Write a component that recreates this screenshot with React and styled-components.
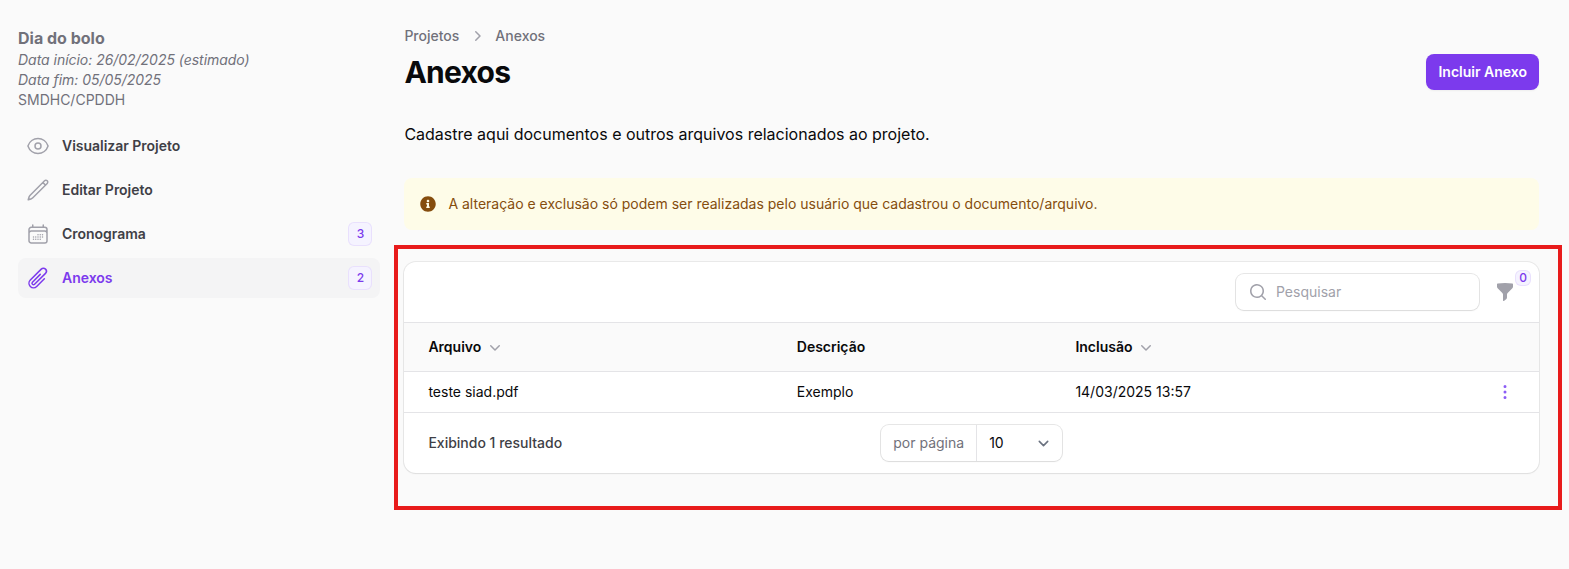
import React from "react";
import styled, { createGlobalStyle } from "styled-components";
import {
  HiOutlineEye,
  HiOutlinePencil,
  HiOutlineCalendarDays,
  HiOutlinePaperClip,
  HiMiniChevronRight,
  HiMiniChevronDown,
  HiMiniMagnifyingGlass,
  HiMiniFunnel,
  HiMiniEllipsisVertical,
} from "react-icons/hi2";
import { FaInfoCircle } from "react-icons/fa";

const GlobalStyle = createGlobalStyle`
  *, *::before, *::after { box-sizing: border-box; }
  body {
    margin: 0;
    background: #fafafa;
    color: #09090b;
    font-family: Inter, "Liberation Sans", sans-serif;
    font-size: 14px;
    line-height: 20px;
  }
  svg { display: block; flex-shrink: 0; }
  h1, p { margin: 0; }
  button, input { font: inherit; }
`;

const Page = styled.div`
  position: relative;
  display: flex;
  gap: 24px;
  height: 569px;
  padding: 26px 30px 0 18px;
  overflow: hidden;
`;

const Sidebar = styled.aside`
  width: 362.4px;
  flex-shrink: 0;
  color: #71717a;
`;

const ProjectName = styled.div`
  font-size: 16px;
  line-height: 24px;
  font-weight: 700;
`;

const ProjectInfo = styled.div`
  font-style: ${(p) => (p.$italic ? "italic" : "normal")};
  letter-spacing: ${(p) => (p.$italic ? "-0.03px" : "normal")};
`;

const Nav = styled.nav`
  display: flex;
  flex-direction: column;
  gap: 4px;
  margin-top: 16px;
`;

const NavItem = styled.a`
  display: flex;
  align-items: center;
  gap: 12px;
  height: 40px;
  padding: 8px;
  border-radius: 8px;
  font-weight: 600;
  letter-spacing: -0.02px;
  color: ${(p) => (p.$active ? "#7c3aed" : "#3f3f46")};
  background: ${(p) => (p.$active ? "#f4f4f5" : "transparent")};

  svg {
    color: ${(p) => (p.$active ? "#7c3aed" : "#a1a1aa")};
  }
`;

const NavLabel = styled.span`
  flex: 1;
`;

const Badge = styled.span`
  display: flex;
  align-items: center;
  justify-content: center;
  min-width: ${(p) => (p.$small ? 16 : 24)}px;
  height: ${(p) => (p.$small ? 16 : 24)}px;
  border-radius: 6px;
  background: #f5f3ff;
  box-shadow: inset 0 0 0 1px rgba(124, 58, 237, 0.1);
  color: #7c3aed;
  font-size: 12px;
  line-height: 16px;
  font-weight: 450;
`;

const Main = styled.main`
  flex: 1;
  min-width: 0;
`;

const Breadcrumbs = styled.div`
  display: flex;
  align-items: center;
  gap: 8px;
  margin-bottom: 8px;
  font-weight: 500;
  color: #71717a;

  svg {
    color: #a1a1aa;
  }
`;

const Header = styled.header`
  display: flex;
  align-items: center;
  justify-content: space-between;
`;

const Title = styled.h1`
  font-size: 30px;
  line-height: 36px;
  font-weight: 700;
  letter-spacing: -0.025em;
`;

const PrimaryButton = styled.button`
  height: 36px;
  padding: 8px 12px;
  border: 0;
  border-radius: 8px;
  background: #7c3aed;
  box-shadow: 0 1px 2px rgba(0, 0, 0, 0.05);
  color: #fff;
  font-weight: 600;
`;

const Description = styled.p`
  margin-top: 32px;
  font-size: 16px;
  line-height: 24px;
`;

const Notice = styled.div`
  display: flex;
  align-items: center;
  gap: 12px;
  height: 52px;
  margin-top: 32px;
  padding: 16px;
  border-radius: 8px;
  background: #fefce8;
  color: #854d0e;
`;

const Card = styled.section`
  margin-top: 32px;
  border-radius: 12px;
  background: #fff;
  box-shadow: 0 0 0 1px rgba(9, 9, 11, 0.07), 0 1px 2px rgba(0, 0, 0, 0.05);
`;

const Toolbar = styled.div`
  display: flex;
  align-items: center;
  justify-content: flex-end;
  gap: 16px;
  height: 60px;
  padding: 12px 24px;
`;

const SearchBox = styled.label`
  display: flex;
  align-items: center;
  gap: 8px;
  width: 243px;
  height: 36px;
  padding: 0 12px;
  border-radius: 8px;
  box-shadow: 0 0 0 1px rgba(9, 9, 11, 0.1), 0 1px 2px rgba(0, 0, 0, 0.05);
  color: #a1a1aa;
`;

const SearchInput = styled.input`
  flex: 1;
  min-width: 0;
  padding: 0;
  border: 0;
  outline: 0;
  background: transparent;
  color: #09090b;

  &::placeholder {
    color: #a1a1aa;
    opacity: 1;
  }
`;

const FilterButton = styled.div`
  position: relative;
  color: #a1a1aa;

  ${Badge} {
    position: absolute;
    top: -12px;
    left: 20px;
  }
`;

const TableRow = styled.div`
  display: grid;
  grid-template-columns: 368.4px 278.6px 1fr 20px;
  align-items: center;
  height: ${(p) => (p.$head ? 49 : 41)}px;
  padding: 0 24px;
  border-top: 1px solid #e4e4e7;
  background: ${(p) => (p.$head ? "#fafafa" : "transparent")};
  font-weight: ${(p) => (p.$head ? 600 : 400)};
`;

const HeadCell = styled.div`
  display: flex;
  align-items: center;
  gap: 4px;

  svg {
    color: #a1a1aa;
  }
`;

const RowMenu = styled.div`
  color: #8b5cf6;
`;

const CardFooter = styled.footer`
  display: grid;
  grid-template-columns: 1fr auto 1fr;
  align-items: center;
  height: 61px;
  padding: 0 24px;
  border-top: 1px solid #e4e4e7;
`;

const ResultCount = styled.span`
  font-weight: 500;
  color: #3f3f46;
`;

const PageSize = styled.div`
  display: flex;
  height: 36px;
  border-radius: 8px;
  box-shadow: 0 0 0 1px rgba(9, 9, 11, 0.1), 0 1px 2px rgba(0, 0, 0, 0.05);
`;

const PageSizeLabel = styled.span`
  padding: 8px 12px;
  border-right: 1px solid #e4e4e7;
  color: #71717a;
`;

const PageSizeValue = styled.span`
  display: flex;
  align-items: center;
  justify-content: space-between;
  width: 85px;
  padding: 0 8px 0 12px;
`;

const Highlight = styled.div`
  position: absolute;
  left: 394px;
  top: 245px;
  width: 1168px;
  height: 265px;
  border: 4px solid #e81b1b;
  pointer-events: none;
`;

const navItems = [
  { label: "Visualizar Projeto", Icon: HiOutlineEye },
  { label: "Editar Projeto", Icon: HiOutlinePencil },
  { label: "Cronograma", Icon: HiOutlineCalendarDays, count: 3 },
  { label: "Anexos", Icon: HiOutlinePaperClip, count: 2, active: true },
];

export default function App() {
  return (
    <>
      <GlobalStyle />
      <Page>
        <Sidebar>
          <ProjectName>Dia do bolo</ProjectName>
          <ProjectInfo $italic>Data início: 26/02/2025 (estimado)</ProjectInfo>
          <ProjectInfo $italic>Data fim: 05/05/2025</ProjectInfo>
          <ProjectInfo>SMDHC/CPDDH</ProjectInfo>
          <Nav>
            {navItems.map(({ label, Icon, count, active }) => (
              <NavItem key={label} $active={active}>
                <Icon size={24} />
                <NavLabel>{label}</NavLabel>
                {count && <Badge>{count}</Badge>}
              </NavItem>
            ))}
          </Nav>
        </Sidebar>
        <Main>
          <Breadcrumbs>
            <span>Projetos</span>
            <HiMiniChevronRight size={20} />
            <span>Anexos</span>
          </Breadcrumbs>
          <Header>
            <Title>Anexos</Title>
            <PrimaryButton>Incluir Anexo</PrimaryButton>
          </Header>
          <Description>Cadastre aqui documentos e outros arquivos relacionados ao projeto.</Description>
          <Notice>
            <FaInfoCircle size={16} />
            <span>A alteração e exclusão só podem ser realizadas pelo usuário que cadastrou o documento/arquivo.</span>
          </Notice>
          <Card>
            <Toolbar>
              <SearchBox>
                <HiMiniMagnifyingGlass size={20} />
                <SearchInput placeholder="Pesquisar" />
              </SearchBox>
              <FilterButton>
                <HiMiniFunnel size={20} />
                <Badge $small>0</Badge>
              </FilterButton>
            </Toolbar>
            <TableRow $head>
              <HeadCell>
                Arquivo <HiMiniChevronDown size={20} />
              </HeadCell>
              <HeadCell>Descrição</HeadCell>
              <HeadCell>
                Inclusão <HiMiniChevronDown size={20} />
              </HeadCell>
            </TableRow>
            <TableRow>
              <span>teste siad.pdf</span>
              <span>Exemplo</span>
              <span>14/03/2025 13:57</span>
              <RowMenu>
                <HiMiniEllipsisVertical size={20} />
              </RowMenu>
            </TableRow>
            <CardFooter>
              <ResultCount>Exibindo 1 resultado</ResultCount>
              <PageSize>
                <PageSizeLabel>por página</PageSizeLabel>
                <PageSizeValue>
                  10
                  <svg width="21" height="21" viewBox="0 0 20 20" fill="none">
                    <path d="M6 8l4 4 4-4" stroke="#6b7280" strokeWidth="1.5" strokeLinecap="round" strokeLinejoin="round" />
                  </svg>
                </PageSizeValue>
              </PageSize>
            </CardFooter>
          </Card>
        </Main>
        <Highlight />
      </Page>
    </>
  );
}
